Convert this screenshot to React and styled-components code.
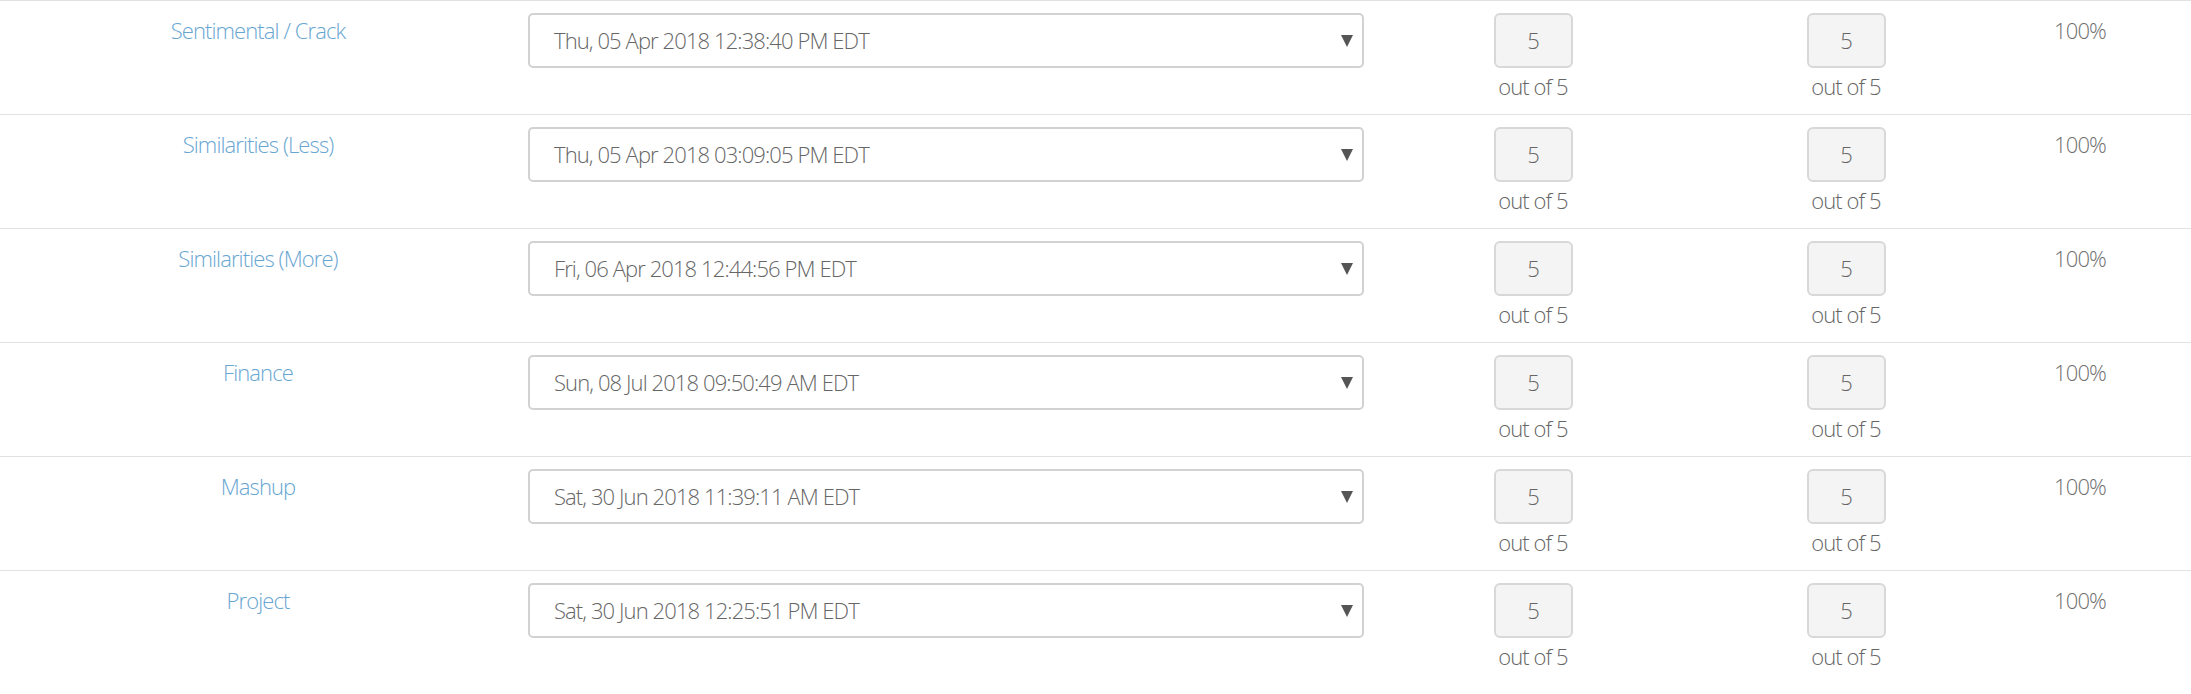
import React from 'react'
import styled, { createGlobalStyle } from 'styled-components'

const GlobalStyle = createGlobalStyle`
  body {
    margin: 0;
    background: #fff;
    font-family: 'Open Sans', 'Liberation Sans', sans-serif;
    font-weight: 300;
    color: #666;
  }
`

const scores = [
  { name: 'Sentimental / Crack', date: 'Thu, 05 Apr 2018 12:38:40 PM EDT' },
  { name: 'Similarities (Less)', date: 'Thu, 05 Apr 2018 03:09:05 PM EDT' },
  { name: 'Similarities (More)', date: 'Fri, 06 Apr 2018 12:44:56 PM EDT' },
  { name: 'Finance', date: 'Sun, 08 Jul 2018 09:50:49 AM EDT' },
  { name: 'Mashup', date: 'Sat, 30 Jun 2018 11:39:11 AM EDT' },
  { name: 'Project', date: 'Sat, 30 Jun 2018 12:25:51 PM EDT' },
]

const Arrow = () => (
  <svg width="12" height="12" viewBox="0 0 12 12">
    <polygon points="0,0 12,0 6,12" fill="#555" />
  </svg>
)

const Score = ({ value, max }) => (
  <ScoreCell>
    <ScoreBox>{value}</ScoreBox>
    <OutOf>out of {max}</OutOf>
  </ScoreCell>
)

const App = () => {
  return (
    <>
      <GlobalStyle />
      <StyledTable>
        {scores.map(item => (
          <Row key={item.name}>
            <Label>{item.name}</Label>
            <SelectCell>
              <SelectBox>
                <span>{item.date}</span>
                <Arrow />
              </SelectBox>
            </SelectCell>
            <Score value={5} max={5} />
            <Score value={5} max={5} />
            <Percent>100%</Percent>
          </Row>
        ))}
      </StyledTable>
    </>
  )
}

const StyledTable = styled.div`
  width: 100%;
  font-size: 22px;
  letter-spacing: -0.9px;
  line-height: 1.2;
`

const Row = styled.div`
  display: grid;
  grid-template-columns: 516px 860px 314px 312px 156px 1fr;
  align-items: start;
  height: 114px;
  box-sizing: border-box;
  padding-top: 12px;
  border-top: 1px solid #e2e2e2;
`

const Label = styled.div`
  margin-top: 4px;
  text-align: center;
  color: #68a6d2;
`

const SelectCell = styled.div`
  padding-left: 12px;
`

const SelectBox = styled.div`
  display: flex;
  align-items: center;
  justify-content: space-between;
  width: 836px;
  height: 55px;
  box-sizing: border-box;
  padding: 0 9px 0 24px;
  border: 2px solid #d2d2d2;
  border-radius: 5px;
  background: #fff;
  color: #666;
`

const ScoreCell = styled.div`
  display: flex;
  flex-direction: column;
  align-items: center;
`

const ScoreBox = styled.div`
  display: flex;
  align-items: center;
  justify-content: center;
  width: 79px;
  height: 55px;
  box-sizing: border-box;
  border: 2px solid #d8d8d8;
  border-radius: 6px;
  background: #f4f4f4;
  color: #666;
`

const OutOf = styled.div`
  margin-top: 5px;
  color: #666;
`

const Percent = styled.div`
  margin-top: 4px;
  text-align: center;
  color: #707070;
`

export default App
